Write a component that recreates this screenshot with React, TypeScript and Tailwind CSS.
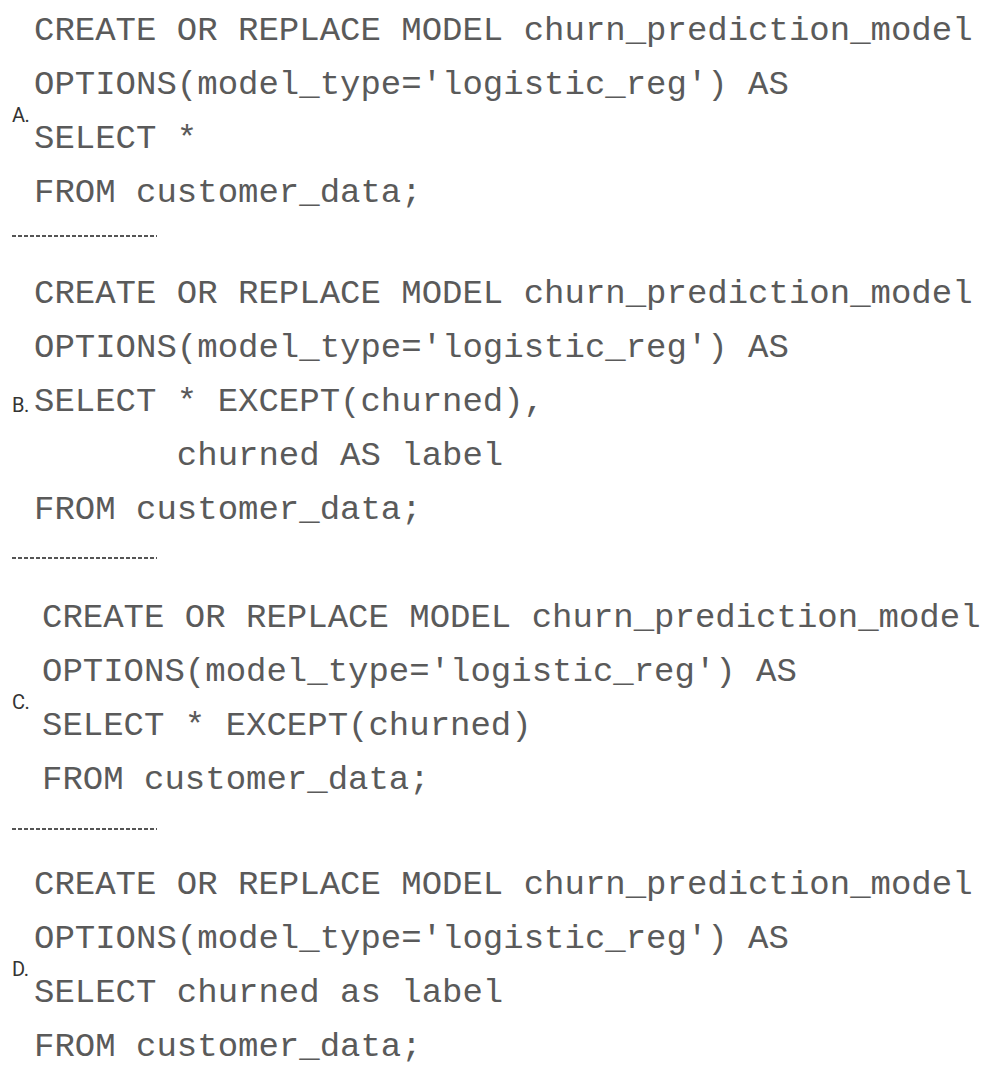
const options = [
  {
    label: 'A.',
    indent: 'pl-0',
    wrap: 'mt-[4px]',
    lines: [
      'CREATE OR REPLACE MODEL churn_prediction_model',
      "OPTIONS(model_type='logistic_reg') AS",
      'SELECT *',
      'FROM customer_data;',
    ],
  },
  {
    label: 'B.',
    indent: 'pl-0',
    wrap: 'mt-[30px]',
    lines: [
      'CREATE OR REPLACE MODEL churn_prediction_model',
      "OPTIONS(model_type='logistic_reg') AS",
      'SELECT * EXCEPT(churned),',
      '       churned AS label',
      'FROM customer_data;',
    ],
  },
  {
    label: 'C.',
    indent: 'pl-[8px]',
    wrap: 'mt-[32px]',
    lines: [
      'CREATE OR REPLACE MODEL churn_prediction_model',
      "OPTIONS(model_type='logistic_reg') AS",
      'SELECT * EXCEPT(churned)',
      'FROM customer_data;',
    ],
  },
  {
    label: 'D.',
    indent: 'pl-0',
    wrap: 'mt-[28px]',
    lines: [
      'CREATE OR REPLACE MODEL churn_prediction_model',
      "OPTIONS(model_type='logistic_reg') AS",
      'SELECT churned as label',
      'FROM customer_data;',
    ],
  },
];

const sepMargins = ['mt-[15px]', 'mt-[20px]', 'mt-[21px]'];

function Separator({ className }: { className: string }) {
  return (
    <div
      className={`${className} h-[2px] w-[145px] bg-[repeating-linear-gradient(to_right,#555_0_4px,transparent_4px_6px)]`}
    />
  );
}

export default function App() {
  return (
    <div className="min-h-screen w-[997px] bg-white px-3 pb-4">
      {options.map((opt, i) => (
        <div key={opt.label}>
          <div className={`flex items-center ${opt.wrap}`}>
            <span className="w-[22px] shrink-0 pt-[6px] font-['Roboto',sans-serif] text-[20px] leading-none tracking-[-0.5px] text-[#333]">
              {opt.label}
            </span>
            <div className={`${opt.indent} font-['Liberation_Mono','Courier_New',monospace] text-[34px] leading-[54px] text-[#5a5a5a]`}>
              {opt.lines.map((line, j) => (
                <div key={j} className="whitespace-pre">
                  {line}
                </div>
              ))}
            </div>
          </div>
          {i < options.length - 1 && <Separator className={sepMargins[i]} />}
        </div>
      ))}
    </div>
  );
}
